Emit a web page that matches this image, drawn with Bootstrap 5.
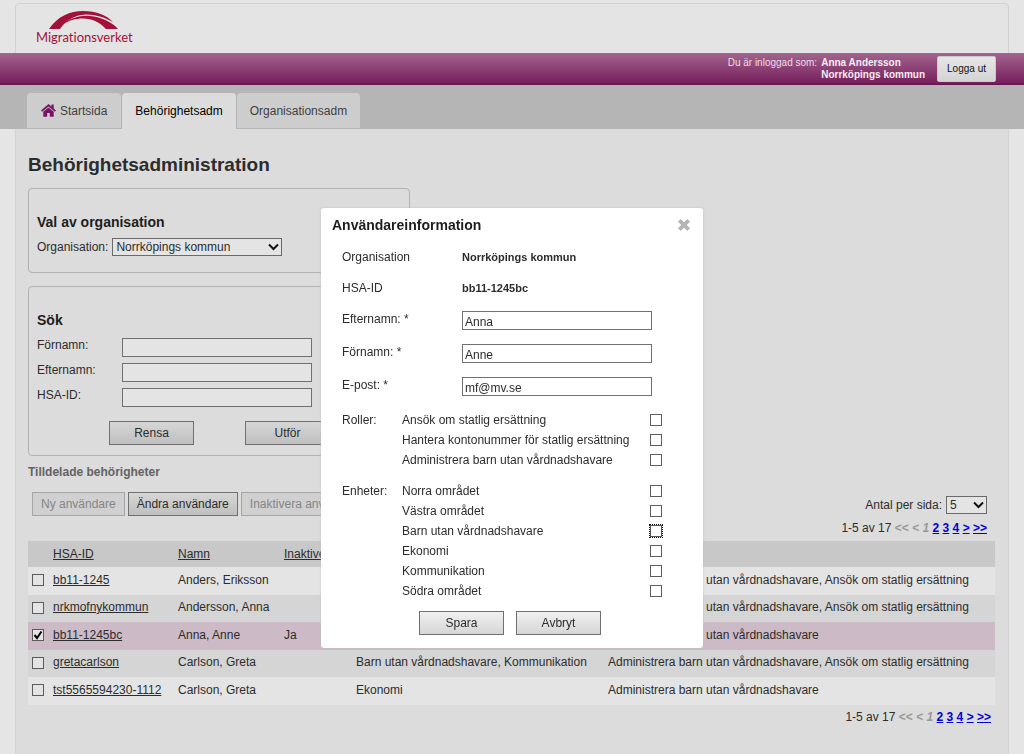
<!DOCTYPE html>
<html lang="sv">
<head>
<meta charset="utf-8">
<meta name="viewport" content="width=device-width, initial-scale=1">
<title>Behörighetsadministration – Migrationsverket</title>
<link href="https://cdn.jsdelivr.net/npm/bootstrap@5.3.0/dist/css/bootstrap.min.css" rel="stylesheet">
<style>
  body { background: #e5e5e5; color: #2c2c2c; font: 12px/16px "Liberation Sans", Arial, sans-serif; }
  h1 { margin-bottom: 11px; font-size: 19px; line-height: 24px; font-weight: 700; }
  h2 { font-size: 14px; line-height: 20px; font-weight: 700; color: #1e1e1e; }
  h3 { margin: 8px 0 12px; font-size: 12px; line-height: 16px; font-weight: 700; color: #636363; }
  .page-x { margin-left: 15px; margin-right: 15px; }

  .brand-panel { height: 50px; margin-top: 3px; padding: 7px 20px 0; border: 1px solid #d0d0d0; border-bottom: 0; border-radius: 5px 5px 0 0; background: #e4e4e4; }
  .brand-name { font: 13px/14px Lato, sans-serif; font-variant-ligatures: none; color: #a3103a; }
  .user-bar { height: 32px; padding-right: 28px; background: linear-gradient(#a3658f, #761f5c 94%, #5d1249); color: #eddde8; font-size: 10px; line-height: 12px; }
  .user-bar strong { color: #f5edf3; }
  .btn-logout { height: 26px; padding: 0 9px; border: 1px solid #c9c9c9; border-radius: 2px; background: linear-gradient(#e6e6e6, #d4d4d4); font-size: 10px; line-height: 12px; color: #111; }

  .tab-bar { height: 44px; padding: 8px 27px 0; background: #b5b5b5; }
  .tab-list { gap: 1px; }
  .tab-bar .nav-link { height: 35px; padding: 10px 13px; border: 0; border-radius: 4px 4px 0 0; background: #cdcdcd; color: #3f3f3f; }
  .tab-bar .nav-link.active { height: 36px; background: #dcdcdc; color: #000; }
  .tab-bar .tab-home { padding-left: 14px; padding-right: 14px; }

  .main-panel { min-height: 625px; padding: 24px 13px 16px 12px; border: 1px solid #d2d2d2; border-width: 0 1px; background: #dcdcdc; }
  .box { width: 382px; border: 1px solid #b2b2b2; border-radius: 4px; padding: 23px 8px 16px; }
  .box + .box { margin-top: 13px; padding-bottom: 10px; }
  .org-row { margin-top: 6px; }
  .lbl { width: 85px; line-height: 14px; }
  .search-row { height: 25px; }
  .search-actions { gap: 51px; padding: 8px 0 0 72px; }
  .tools { gap: 3px; }

  .field { width: 190px; height: 19px; padding: 2px 2px 0; border: 1px solid #707070; border-radius: 0; background: #e4e4e4; font-size: 12px; line-height: 16px; color: #2c2c2c; }
  .modal .field { background: #fff; }
  .drop { appearance: none; height: 18px; padding: 0 18px 0 3px; border: 1px solid #6a6a6a; border-radius: 0; color: #2c2c2c; font-size: 12px; line-height: 16px;
    background: #e4e4e4 url("data:image/svg+xml,%3Csvg xmlns='http://www.w3.org/2000/svg' viewBox='0 0 11 8'%3E%3Cpath d='M1 1.5l4.500 4.500 4.500-4.500' fill='none' stroke='%23111' stroke-width='2'/%3E%3C/svg%3E") no-repeat right 2px center / 11px 8px; }
  .drop-org { width: 170px; }
  .drop-count { width: 41px; }
  .tick { appearance: none; width: 12px; height: 12px; margin: 0; border: 1px solid #5c5c5c; background: #e4e4e4; flex: none; }
  .modal .tick { margin-top: 2px; background: #fff; }
  .tick:checked { background: #e4e4e4 url("data:image/svg+xml,%3Csvg xmlns='http://www.w3.org/2000/svg' viewBox='0 0 10 10'%3E%3Cpath d='M1.500 5l2.500 3L8.500 1.500' fill='none' stroke='%23000' stroke-width='2'/%3E%3C/svg%3E") center / 10px 10px; }
  .modal .tick-focus { border-color: #555; outline: 1px dotted #111; }

  .btn-flat { height: 24px; padding: 0 8px; border: 1px solid #707070; border-radius: 0; background: linear-gradient(#d6d6d6, #bfbfbf); color: #2c2c2c; font-size: 12px; line-height: 20px; }
  .btn-flat:disabled { border-color: #a5a5a5; background: #d0d0d0; color: #858585; opacity: 1; }
  .btn-wide { width: 85px; }
  .modal .btn-flat { background: linear-gradient(#f0f0f0, #d6d6d6); }

  .pager a { color: #0000dc; font-weight: 700; }
  .pager .off { color: #999; font-weight: 700; }
  .pager-top { margin: 6px 0 5px; }

  .user-table { table-layout: fixed; }
  .user-table th, .user-table td { height: 27px; padding: 0 5px; white-space: nowrap; font-weight: 400; vertical-align: middle; }
  .user-table th { height: 26px; padding-bottom: 1px; background: #c8c8c8; }
  .user-table td { padding-bottom: 3px; }
  .user-table tbody tr:nth-child(odd) td { height: 28px; background: #e4e4e4; }
  .user-table tbody tr:nth-child(even) td { background: #d5d5d5; }
  .user-table tbody tr.picked td { background: #cdbac7; }
  .user-table td:first-child { padding-left: 4px; padding-bottom: 2px; }
  .user-table a, .user-table a:hover { color: #2c2c2c; }
  .c-tick { width: 20px; } .c-id { width: 125px; } .c-name { width: 106px; } .c-off { width: 72px; } .c-unit { width: 252px; }

  .info-dialog { max-width: 382px; margin: 208px auto 0; }
  .info-dialog .modal-content { border: 0; border-radius: 3px; color: #2c2c2c; box-shadow: 0 0 2px #bbb; }
  .info-head { padding: 7px 12px 0 11px; }
  .info-body { padding: 14px 41px 13px 21px; }
  .info-row { min-height: 31px; }
  .info-row.tall { min-height: 33px; }
  .info-row > :first-child { width: 120px; flex: none; }
  .info-row b { font-size: 11px; }
  .opt-group { padding-top: 2px; }
  .opt-group + .opt-group { padding-top: 11px; }
  .group-label { width: 60px; flex: none; }
  .opt { height: 20px; }
  .btn-x { width: 14px; height: 14px; }
</style>
</head>
<body>

<header>
  <div class="page-x brand-panel">
    <a href="#" class="d-inline-block text-decoration-none">
      <svg class="d-block" width="94" height="19" viewBox="0 0 94 19" fill="#a3103a" aria-hidden="true">
        <path d="M13 18C22 5 34 0 47 0c14 0 23 4 30 11C69 6 58 3.200 50 3.400 38 3.800 29 10 24 18z"/>
        <path d="M27 13.500C35 6 47 3.500 58 5.500 68 7.500 77 12 82 18H70C64 11.500 56 7.500 47 7.500c-8 0-14 2-20 6z"/>
      </svg>
      <span class="brand-name d-block">Migrationsverket</span>
    </a>
  </div>
  <div class="user-bar d-flex justify-content-end align-items-center">
    <div class="d-flex gap-1 me-2 pb-0">
      <span>Du är inloggad som:</span>
      <strong>Anna Andersson<br>Norrköpings kommun</strong>
    </div>
    <button type="button" class="btn btn-logout ms-1">Logga ut</button>
  </div>
  <nav class="tab-bar">
    <ul class="nav flex-nowrap tab-list">
      <li class="nav-item"><a class="nav-link tab-home d-flex align-items-center gap-1" href="#">
        <svg width="15" height="13" viewBox="0 0 15 13" fill="#7a1266" aria-hidden="true"><path d="M7.500 0L0 6.400l1.200 1.400 6.300-5.300 6.300 5.300L15 6.400l-2.300-2V.6h-2.200v1.900z"/><path d="M7.500 3.500L2.300 7.800v4.900h3.900V9h2.600v3.700h3.900V7.800z"/></svg>Startsida</a></li>
      <li class="nav-item"><a class="nav-link active" href="#" aria-current="page">Behörighetsadm</a></li>
      <li class="nav-item"><a class="nav-link" href="#">Organisationsadm</a></li>
    </ul>
  </nav>
</header>

<main class="page-x main-panel">
  <h1>Behörighetsadministration</h1>

  <section class="box">
    <h2 class="mb-0">Val av organisation</h2>
    <div class="org-row d-flex align-items-center gap-1">
      <label for="org">Organisation:</label>
      <select id="org" class="drop drop-org"><option>Norrköpings kommun</option></select>
    </div>
  </section>

  <section class="box">
    <h2 class="mb-2">Sök</h2>
    <div class="search-row d-flex"><label class="lbl" for="s1">Förnamn:</label><input id="s1" class="field" type="text"></div>
    <div class="search-row d-flex"><label class="lbl" for="s2">Efternamn:</label><input id="s2" class="field" type="text"></div>
    <div class="search-row d-flex"><label class="lbl" for="s3">HSA-ID:</label><input id="s3" class="field" type="text"></div>
    <div class="search-actions d-flex">
      <button type="button" class="btn btn-flat btn-wide">Rensa</button>
      <button type="button" class="btn btn-flat btn-wide">Utför</button>
    </div>
  </section>

  <h3>Tilldelade behörigheter</h3>

  <div class="d-flex justify-content-between align-items-start px-1">
    <div class="d-flex tools">
      <button type="button" class="btn btn-flat" disabled>Ny användare</button>
      <button type="button" class="btn btn-flat">Ändra användare</button>
      <button type="button" class="btn btn-flat" disabled>Inaktivera användare</button>
    </div>
    <div class="me-1 pt-1 text-end">
      <div class="d-flex align-items-center justify-content-end gap-1">
        <label for="per">Antal per sida:</label>
        <select id="per" class="drop drop-count"><option>5</option></select>
      </div>
      <div class="pager pager-top">1-5 av 17 <span class="off">&lt;&lt; &lt; <i>1</i></span> <a href="#">2</a> <a href="#">3</a> <a href="#">4</a> <a href="#">&gt;</a> <a href="#">&gt;&gt;</a></div>
    </div>
  </div>

  <table class="user-table w-100">
    <thead>
      <tr><th class="c-tick"></th><th class="c-id"><a href="#">HSA-ID</a></th><th class="c-name"><a href="#">Namn</a></th><th class="c-off"><a href="#">Inaktiverad</a></th><th class="c-unit">Enheter</th><th></th></tr>
    </thead>
    <tbody>
      <tr><td><input type="checkbox" class="tick d-block" aria-label="Välj bb11-1245"></td><td><a href="#">bb11-1245</a></td><td>Anders, Eriksson</td><td></td><td></td><td>Administrera barn utan vårdnadshavare, Ansök om statlig ersättning</td></tr>
      <tr><td><input type="checkbox" class="tick d-block" aria-label="Välj nrkmofnykommun"></td><td><a href="#">nrkmofnykommun</a></td><td>Andersson, Anna</td><td></td><td></td><td>Administrera barn utan vårdnadshavare, Ansök om statlig ersättning</td></tr>
      <tr class="picked"><td><input type="checkbox" class="tick d-block" checked aria-label="Välj bb11-1245bc"></td><td><a href="#">bb11-1245bc</a></td><td>Anna, Anne</td><td>Ja</td><td></td><td>Administrera barn utan vårdnadshavare</td></tr>
      <tr><td><input type="checkbox" class="tick d-block" aria-label="Välj gretacarlson"></td><td><a href="#">gretacarlson</a></td><td>Carlson, Greta</td><td></td><td>Barn utan vårdnadshavare, Kommunikation</td><td>Administrera barn utan vårdnadshavare, Ansök om statlig ersättning</td></tr>
      <tr><td><input type="checkbox" class="tick d-block" aria-label="Välj tst5565594230-1112"></td><td><a href="#">tst5565594230-1112</a></td><td>Carlson, Greta</td><td></td><td>Ekonomi</td><td>Administrera barn utan vårdnadshavare</td></tr>
    </tbody>
  </table>
  <div class="pager text-end mt-1 me-1">1-5 av 17 <span class="off">&lt;&lt; &lt; <i>1</i></span> <a href="#">2</a> <a href="#">3</a> <a href="#">4</a> <a href="#">&gt;</a> <a href="#">&gt;&gt;</a></div>
</main>

<div class="modal d-block" role="dialog" aria-modal="true" aria-labelledby="infoTitle">
  <div class="modal-dialog info-dialog">
    <form class="modal-content">
      <div class="info-head d-flex justify-content-between align-items-center">
        <h2 id="infoTitle" class="m-0">Användareinformation</h2>
        <button type="button" class="btn btn-x p-0 border-0 d-flex" aria-label="Stäng"><svg width="14" height="14" viewBox="0 0 14 14" aria-hidden="true"><path d="M2.300 2.300l9.400 9.400M11.700 2.300l-9.400 9.400" stroke="#b4b4b4" stroke-width="3.800"/></svg></button>
      </div>
      <div class="info-body">
        <div class="info-row d-flex"><span>Organisation</span><b>Norrköpings kommun</b></div>
        <div class="info-row d-flex"><span>HSA-ID</span><b>bb11-1245bc</b></div>
        <div class="info-row tall d-flex"><label for="m1">Efternamn: *</label><input id="m1" class="field" type="text" value="Anna"></div>
        <div class="info-row tall d-flex"><label for="m2">Förnamn: *</label><input id="m2" class="field" type="text" value="Anne"></div>
        <div class="info-row tall d-flex"><label for="m3">E-post: *</label><input id="m3" class="field" type="text" value="mf@mv.se"></div>

        <div class="opt-group d-flex" role="group" aria-labelledby="gRoll">
          <span id="gRoll" class="group-label">Roller:</span>
          <div class="flex-grow-1">
            <label class="opt d-flex justify-content-between">Ansök om statlig ersättning<input type="checkbox" class="tick"></label>
            <label class="opt d-flex justify-content-between">Hantera kontonummer för statlig ersättning<input type="checkbox" class="tick"></label>
            <label class="opt d-flex justify-content-between">Administrera barn utan vårdnadshavare<input type="checkbox" class="tick"></label>
          </div>
        </div>
        <div class="opt-group d-flex" role="group" aria-labelledby="gEnh">
          <span id="gEnh" class="group-label">Enheter:</span>
          <div class="flex-grow-1">
            <label class="opt d-flex justify-content-between">Norra området<input type="checkbox" class="tick"></label>
            <label class="opt d-flex justify-content-between">Västra området<input type="checkbox" class="tick"></label>
            <label class="opt d-flex justify-content-between">Barn utan vårdnadshavare<input type="checkbox" class="tick tick-focus"></label>
            <label class="opt d-flex justify-content-between">Ekonomi<input type="checkbox" class="tick"></label>
            <label class="opt d-flex justify-content-between">Kommunikation<input type="checkbox" class="tick"></label>
            <label class="opt d-flex justify-content-between">Södra området<input type="checkbox" class="tick"></label>
          </div>
        </div>
        <div class="d-flex justify-content-center gap-2 pt-2 ps-3">
          <button type="button" class="btn btn-flat btn-wide me-1">Spara</button>
          <button type="button" class="btn btn-flat btn-wide">Avbryt</button>
        </div>
      </div>
    </form>
  </div>
</div>

<script src="https://cdn.jsdelivr.net/npm/bootstrap@5.3.0/dist/js/bootstrap.bundle.min.js"></script>
</body>
</html>
